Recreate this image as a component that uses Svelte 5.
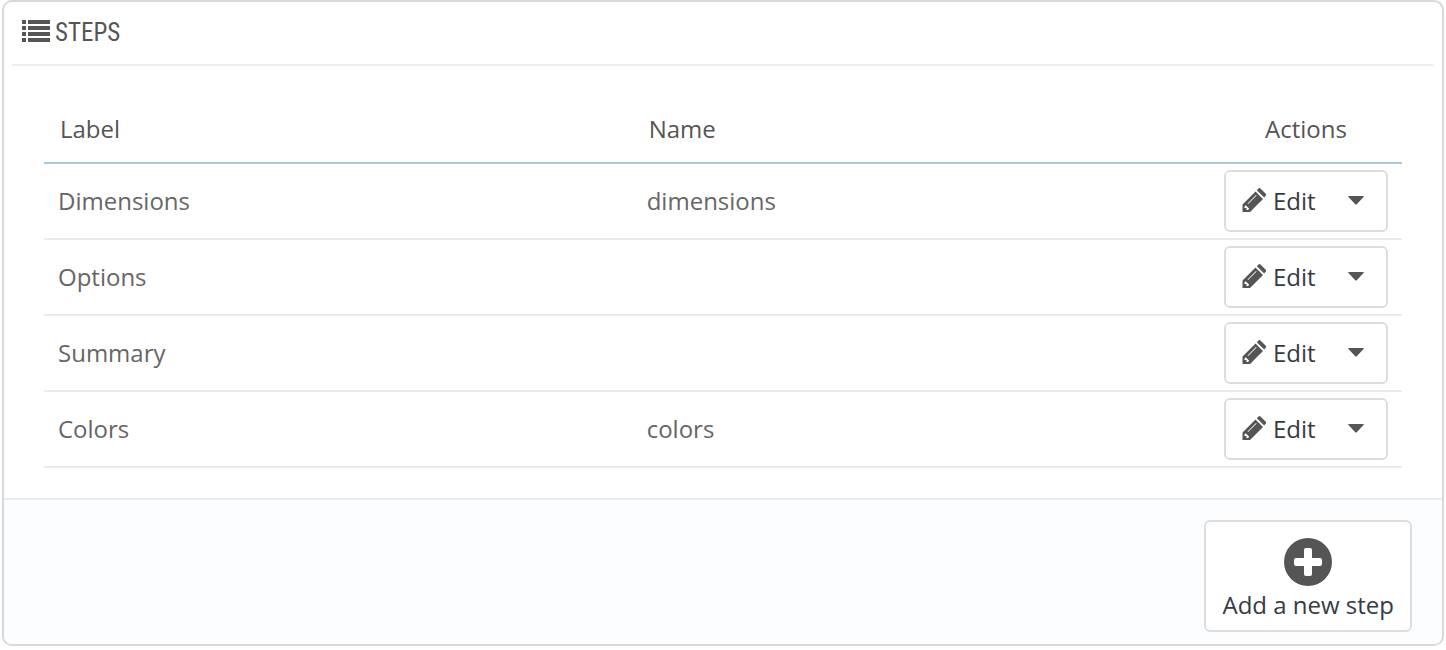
<script>
  const steps = [
    { label: 'Dimensions', name: 'dimensions' },
    { label: 'Options', name: '' },
    { label: 'Summary', name: '' },
    { label: 'Colors', name: 'colors' }
  ];
</script>

<section class="panel">
  <h1>
    <svg viewBox="0 0 28 26" width="28" height="26" aria-hidden="true">
      <path d="M0 0h4v4H0zM6 0h22v4H6zM0 6h4v4H0zM6 6h22v4H6zM0 12h4v4H0zM6 12h22v4H6zM0 18h4v4H0zM6 18h22v4H6z" />
    </svg>
    <span>STEPS</span>
  </h1>
  <div class="body">
    <table>
      <thead>
        <tr><th class="label">Label</th><th>Name</th><th class="actions">Actions</th></tr>
      </thead>
      <tbody>
        {#each steps as step}
          <tr>
            <td>{step.label}</td>
            <td>{step.name}</td>
            <td class="actions">
              <div class="group">
                <button class="edit" type="button">
                  <svg viewBox="0 0 24 26" width="24" height="26" aria-hidden="true">
                    <path fill-rule="evenodd" d="M.5 24V16.500L13.500 3.500l7.500 7.500L8 24zM2.500 18.500v1.500h2v2h1.500l1.200-1.200-3.500-3.500zM5.500 15.500l.6.600L14.600 7.600l-.6-.6zM14.800 2.200L16.300.7q1.200-1.200 2.400 0l4.800 4.800q1.200 1.200 0 2.400L22.200 9.600z" />
                  </svg>
                  <span>Edit</span>
                </button>
                <button class="more" type="button" aria-label="More">
                  <svg viewBox="0 0 16 10" width="16" height="10" aria-hidden="true"><path d="M1 0h14q1.500 0 .5 1L9 8q-1 1-2 0L.5 1q-1-1 .5-1z" /></svg>
                </button>
              </div>
            </td>
          </tr>
        {/each}
      </tbody>
    </table>
  </div>
  <footer>
    <button class="add" type="button">
      <svg viewBox="0 0 48 48" width="48" height="48" aria-hidden="true">
        <circle cx="24" cy="24" r="24" />
        <path class="plus" d="M22 10h4q2 0 2 2v8h8q2 0 2 2v4q0 2-2 2h-8v8q0 2-2 2h-4q-2 0-2-2v-8h-8q-2 0-2-2v-4q0-2 2-2h8v-8q0-2 2-2z" />
      </svg>
      <span>Add a new step</span>
    </button>
  </footer>
</section>

<style>
  :global(body) { background: #fff; }
  .panel {
    margin: 0 2px;
    border: 2px solid #d6d8da;
    border-radius: 10px;
    overflow: hidden;
    background: #fff;
    color: #555;
    font: 24px/32px "Open Sans", "Noto Sans", sans-serif;
  }
  h1 {
    display: flex;
    align-items: center;
    gap: 5px;
    box-sizing: border-box;
    height: 64px;
    margin: 0 8px;
    padding: 0 10px;
    border-bottom: 2px solid #eee;
    font: 400 25px/30px "Roboto Condensed", "Open Sans", sans-serif;
  }
  svg { display: block; flex: none; fill: #555; }
  .body { padding: 32px 40px 30px; }
  table { width: 100%; border-collapse: separate; border-spacing: 0; table-layout: fixed; }
  th, td { box-sizing: border-box; }
  th { height: 66px; padding: 0 16px 2px; border-bottom: 2px solid #a6c9df; font-weight: 400; text-align: left; }
  .label { width: 43.35%; }
  td { height: 76px; padding: 6px 14px; border-bottom: 2px solid #e9ebec; color: #666; }
  .actions { width: 192px; text-align: center; }
  .group { display: flex; border: 2px solid #ddd; border-radius: 6px; overflow: hidden; }
  button { font: inherit; color: #363a41; background: #fff; border: 0; }
  .edit { display: flex; align-items: center; gap: 7px; height: 58px; padding: 0 16px; }
  .more { flex: 1; padding: 0 0 0 16px; }
  footer { display: flex; justify-content: flex-end; padding: 20px 30px 12px; border-top: 2px solid #e9ebec; background: #fcfdfe; }
  .add { display: flex; flex-direction: column; align-items: center; gap: 3px; padding: 16px 16px 9px; border: 2px solid #ddd; border-radius: 6px; }
  .plus { fill: #fff; }
</style>
